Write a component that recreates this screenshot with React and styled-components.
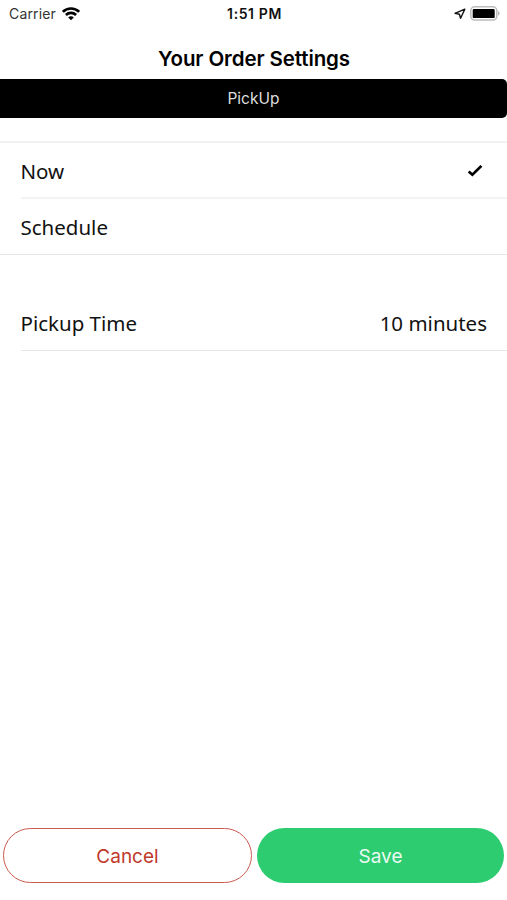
import React from "react";
import styled, { createGlobalStyle } from "styled-components";

const App = () => {
  return (
    <Screen>
      <GlobalStyle />
      <StatusBar>
        <Carrier>
          <span>Carrier</span>
          <WifiIcon />
        </Carrier>
        <Clock>1:51 PM</Clock>
        <Indicators>
          <LocationIcon />
          <BatteryIcon />
        </Indicators>
      </StatusBar>
      <Header>Your Order Settings</Header>
      <OrderType>PickUp</OrderType>
      <Options>
        <Option>
          <span>Now</span>
          <CheckIcon />
        </Option>
        <Option $last>
          <span>Schedule</span>
        </Option>
      </Options>
      <PickupTime>
        <span>Pickup Time</span>
        <span>10 minutes</span>
      </PickupTime>
      <Footer>
        <CancelButton>Cancel</CancelButton>
        <SaveButton>Save</SaveButton>
      </Footer>
    </Screen>
  );
};

export default App;

const WifiIcon = () => (
  <svg width="18" height="14" viewBox="0 0 18 14">
    <g fill="none" stroke="#000" strokeWidth="2.6">
      <path d="M0.9 4.8C5.4 0.4 12.6 0.4 17.1 4.8" />
      <path d="M3.9 8C6.8 5.2 11.2 5.2 14.1 8" />
    </g>
    <path d="M9 13.2L6.2 10.4C7.7 9 10.3 9 11.8 10.4Z" />
  </svg>
);

const LocationIcon = () => (
  <svg width="12" height="12" viewBox="0 0 12 12">
    <path
      d="M10.8 1.2L1 5.3L5.4 6.2L6.6 10.2Z"
      fill="none"
      stroke="#111"
      strokeWidth="1.4"
      strokeLinejoin="round"
    />
  </svg>
);

const BatteryIcon = () => (
  <svg width="30" height="15" viewBox="0 0 30 15">
    <rect
      x="0.8"
      y="0.8"
      width="26"
      height="13.2"
      rx="3.8"
      fill="#fff"
      stroke="#bcbcbc"
      strokeWidth="1.5"
    />
    <rect x="2.7" y="2.9" width="22" height="9.2" rx="1.2" />
    <path d="M28 5C30.2 5.8 30.2 8.8 28 9.6Z" fill="#bbb" />
  </svg>
);

const CheckIcon = () => (
  <svg width="16" height="13" viewBox="0 0 16 13">
    <path
      d="M1.7 7.4L5.4 10.7L14.4 1.9"
      fill="none"
      stroke="#000"
      strokeWidth="2.7"
    />
  </svg>
);

const GlobalStyle = createGlobalStyle`
  body {
    margin: 0;
    background-color: #fff;
  }

  * {
    box-sizing: border-box;
  }
`;

const Screen = styled.div`
  display: flex;
  flex-direction: column;
  height: 900px;
  background-color: #fff;
  color: #111;
  font-family: Inter, "Liberation Sans", sans-serif;
`;

const StatusBar = styled.div`
  display: grid;
  grid-template-columns: 1fr auto 1fr;
  align-items: center;
  height: 27px;
  padding: 0 7px 0 9px;
  font-size: 14px;
`;

const Carrier = styled.div`
  display: flex;
  align-items: center;
  gap: 6px;
  color: #333;
  letter-spacing: 0.15px;
`;

const Clock = styled.div`
  font-size: 14px;
  font-weight: 600;
  letter-spacing: 0.6px;
`;

const Indicators = styled.div`
  display: flex;
  align-items: center;
  justify-content: flex-end;
  gap: 4px;
`;

const Header = styled.div`
  height: 52px;
  padding-left: 1px;
  line-height: 63px;
  text-align: center;
  font-size: 20.5px;
  font-weight: 600;
  letter-spacing: -0.1px;
  color: #000;
`;

const OrderType = styled.div`
  height: 39px;
  line-height: 39px;
  border-radius: 0 5px 5px 0;
  background-color: #000;
  color: #ddd;
  text-align: center;
  font-size: 15.5px;
`;

const Options = styled.div`
  margin-top: 23px;
  padding-left: 20.5px;
  border-top: 2px solid #f1f1f1;
  border-bottom: 1px solid #e6e6e6;
`;

const Row = styled.div`
  display: flex;
  align-items: center;
  justify-content: space-between;
  height: 56px;
  font-family: "Noto Sans", "Open Sans", sans-serif;
  font-size: 20.5px;
`;

const Option = styled(Row)`
  height: ${(props) => (props.$last ? "55px" : "56px")};
  padding-top: 1px;
  padding-right: 24px;
  border-bottom: ${(props) => (props.$last ? "none" : "2px solid #f3f3f3")};
`;

const PickupTime = styled(Row)`
  margin: 40px 0 0 20.5px;
  padding-right: 20px;
  border-bottom: 1px solid #e6e6e6;
`;

const Footer = styled.div`
  display: flex;
  gap: 5px;
  margin-top: auto;
  padding: 0 3px 17px;
`;

const Button = styled.button`
  flex: 1;
  height: 55px;
  padding: 2px 0 0;
  border-radius: 28px;
  font-family: inherit;
  font-size: 19px;
`;

const CancelButton = styled(Button)`
  border: 1.5px solid #cb5a4e;
  background-color: #fff;
  color: #c0392b;
`;

const SaveButton = styled(Button)`
  border: none;
  background-color: #2ecc71;
  color: #eafaf1;
`;
